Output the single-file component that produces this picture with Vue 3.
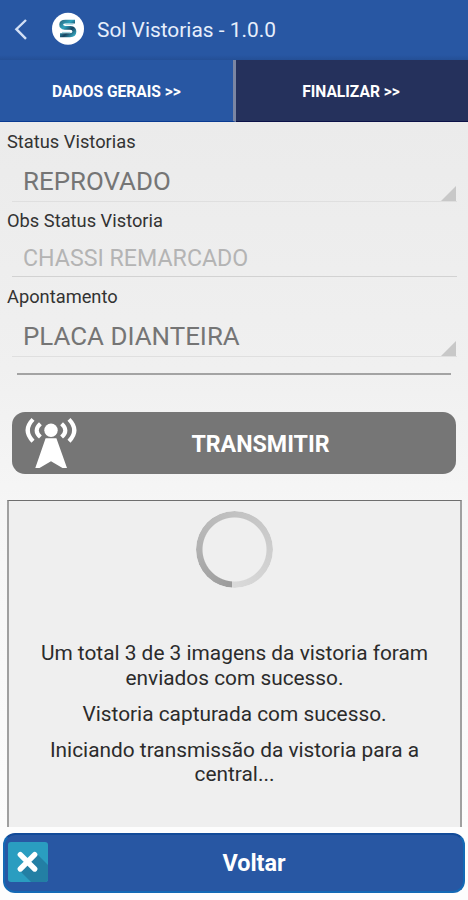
<template>
    <div class="screen">
        <header class="app-bar">
            <button class="back-btn" title="Voltar">
                <svg width="16" height="24" viewBox="0 0 16 24" fill="none">
                    <path d="M13 3L3.4 12.2L13 21.8" stroke="#d3e0f5" stroke-width="2.4"/>
                </svg>
            </button>
            <svg class="logo" width="34" height="34" viewBox="0 0 34 34">
                <defs>
                    <linearGradient id="logoFill" x1="0" y1="0" x2="1" y2="1">
                        <stop offset="0" stop-color="#2c6f86"/>
                        <stop offset="0.35" stop-color="#2fa3bd"/>
                        <stop offset="0.65" stop-color="#17435f"/>
                        <stop offset="1" stop-color="#38a9c0"/>
                    </linearGradient>
                </defs>
                <circle cx="17" cy="16.7" r="16" fill="#fff"/>
                <path d="M24 9.6H14.5Q10.2 9.6 10.2 12.6Q10.2 15.4 14 15.9H19.5Q23.4 16.4 23.4 19.6Q23.4 23.2 19 23.2H9" fill="none" stroke="url(#logoFill)" stroke-width="3.9"/>
                <path d="M14.5 12.2H22.4M11 20.4H19.3" fill="none" stroke="#9bd0dc" stroke-width="1"/>
            </svg>
            <h1 class="app-title">Sol Vistorias - 1.0.0</h1>
        </header>

        <nav class="tabs">
            <button
                v-for="tab in tabs"
                :key="tab.id"
                class="tab"
                :class="{ active: tab.id === activeTab }"
                @click="activeTab = tab.id"
            >
                <span>{{ tab.label }}</span>
            </button>
        </nav>

        <main class="content">
            <div class="field" v-for="field in fields" :key="field.label">
                <div class="field-label">{{ field.label }}</div>
                <div class="field-value" :class="field.type">
                    <span>{{ field.value }}</span>
                    <svg v-if="field.type === 'spinner'" class="corner" width="15" height="15" viewBox="0 0 15 15">
                        <path d="M15 0V15H0Z" fill="#c8c8c8"/>
                    </svg>
                </div>
            </div>

            <div class="divider"></div>

            <button class="send-btn">
                <svg width="54" height="52" viewBox="0 0 54 52" fill="none">
                    <circle cx="27" cy="13.2" r="6.7" fill="#fff"/>
                    <path d="M21.6 21.2H32.4L43 51H38.5L27 44.3L15.5 51H11.3Z" fill="#fff"/>
                    <g stroke="#fff" stroke-width="4.2">
                        <path d="M9 2.4Q-1.6 13.2 9 24.2"/>
                        <path d="M16.4 6.8Q9 13.4 16.4 20"/>
                        <path d="M37.6 6.8Q45 13.4 37.6 20"/>
                        <path d="M45 2.4Q55.6 13.2 45 24.2"/>
                    </g>
                </svg>
                <span>TRANSMITIR</span>
            </button>

            <section class="status-panel">
                <div class="loader"></div>
                <div class="messages">
                    <p v-for="message in messages" :key="message">{{ message }}</p>
                </div>
            </section>
        </main>

        <footer class="footer">
            <button class="exit-btn">
                <svg width="40" height="40" viewBox="0 0 40 40">
                    <rect width="40" height="40" rx="3" fill="#2a9dc0"/>
                    <path d="M28 11L40 23V37Q40 40 37 40H23L11 28Z" fill="#237fa4"/>
                    <path d="M12.3 12.6L26.7 27M26.7 12.6L12.3 27" stroke="#fff" stroke-width="5.4" stroke-linecap="round"/>
                </svg>
                <span>Voltar</span>
            </button>
        </footer>
    </div>
</template>

<script setup>
import { ref } from 'vue';

const activeTab = ref('finalizar');

const tabs = [
    { id: 'dados', label: 'DADOS GERAIS >>' },
    { id: 'finalizar', label: 'FINALIZAR >>' }
];

const fields = [
    { label: 'Status Vistorias', value: 'REPROVADO', type: 'spinner' },
    { label: 'Obs Status Vistoria', value: 'CHASSI REMARCADO', type: 'text' },
    { label: 'Apontamento', value: 'PLACA DIANTEIRA', type: 'spinner' }
];

const messages = [
    'Um total 3 de 3 imagens da vistoria foram enviados com sucesso.',
    'Vistoria capturada com sucesso.',
    'Iniciando transmissão da vistoria para a central...'
];
</script>

<style>
body {
    margin: 0;
    background: #fff;
}
</style>

<style scoped>
.screen {
    width: 468px;
    height: 900px;
    display: flex;
    flex-direction: column;
    overflow: hidden;
    background: #fdfdfd;
    font-family: Roboto, "Liberation Sans", sans-serif;
}

button {
    border: none;
    padding: 0;
    margin: 0;
    font-family: inherit;
    cursor: pointer;
}

.app-bar {
    height: 60px;
    flex: none;
    box-sizing: border-box;
    display: flex;
    align-items: center;
    padding: 0 0 3px 13px;
    background: linear-gradient(#2857a3 55px, #244f96);
}

.back-btn {
    display: flex;
    background: transparent;
}

.logo {
    margin-left: 22px;
}

.app-title {
    margin: 2px 0 0 12px;
    font-size: 20.9px;
    font-weight: 400;
    color: #e6eefb;
    white-space: nowrap;
}

.tabs {
    height: 62px;
    flex: none;
    display: flex;
}

.tab {
    flex: 1;
    box-sizing: border-box;
    padding-top: 2px;
    background: #2857a3;
    border-bottom: 1px solid #093a91;
    color: #fff;
    font-size: 15.6px;
    font-weight: 700;
}

.tab:first-child {
    flex: none;
    width: 236px;
    border-right: 3px solid #7b86a3;
}

.tab.active {
    background: #25315c;
    border-bottom-color: #0b1147;
    padding-right: 2px;
}

.content {
    height: 705px;
    flex: none;
    box-sizing: border-box;
    display: flex;
    flex-direction: column;
    padding: 9px 6px 0 7px;
    background: linear-gradient(#ebebeb, #f0f0f0 35%, #f6f6f6 55%, #fcfcfc);
}

.field {
    margin-bottom: 8px;
}

.field:nth-child(2) {
    margin-bottom: 9px;
}

.field-label {
    line-height: 22px;
    font-size: 18.3px;
    color: #333;
}

.field-value {
    height: 42px;
    box-sizing: border-box;
    margin: 7px 5px 0;
    padding-left: 11px;
    display: flex;
    align-items: center;
    justify-content: space-between;
    border-bottom: 1px solid #dfdfdf;
    color: #757575;
    font-size: 25.9px;
}

.field-value.text {
    height: 38px;
    padding-top: 1px;
    border-bottom-color: #d2d2d2;
    color: #b4b4b4;
    font-size: 23.2px;
}

.corner {
    align-self: flex-end;
    margin-right: 1px;
}

.divider {
    height: 2px;
    flex: none;
    margin: 8px 11px 0 10px;
    background: #a3a3a3;
}

.send-btn {
    height: 62px;
    flex: none;
    margin: 37px 6px 0 5px;
    padding: 0 13px 0 12px;
    box-sizing: border-box;
    display: flex;
    align-items: center;
    border-radius: 13px;
    background: #767676;
    color: #fff;
    font-size: 23.2px;
    font-weight: 700;
}

.send-btn span {
    flex: 1;
    padding-top: 2px;
}

.status-panel {
    flex: 1;
    margin-top: 26px;
    display: flex;
    flex-direction: column;
    align-items: center;
    border: 1px solid #6e6e6e;
    border-width: 1px 2px 0;
    border-color: #6e6e6e #a0a0a0;
    background: #efefef;
}

.loader {
    width: 77px;
    height: 77px;
    flex: none;
    margin: 10px 1px 0 0;
    border-radius: 50%;
    background: conic-gradient(from 184deg, #9b9b9b, #b2b2b2 25%, #c2c2c2 50%, #cecece 75%, #dadada);
    mask: radial-gradient(circle, transparent 31.5px, #000 32.5px);
}

.messages {
    margin-top: 53px;
    padding: 0 20px;
    text-align: center;
    font-size: 20.85px;
    line-height: 24.5px;
    color: #2b2b2b;
}

.messages p {
    margin: 0 0 11.5px;
}

.footer {
    flex: 1;
    padding: 6px 3px 8px;
}

.exit-btn {
    width: 100%;
    height: 60px;
    box-sizing: border-box;
    display: flex;
    align-items: center;
    padding: 0 3px 2px 3px;
    border: 2px solid #1469b5;
    border-top-color: #124a98;
    border-radius: 12px;
    background: #2857a3;
    color: #fff;
    font-size: 23.4px;
    font-weight: 700;
}

.exit-btn span {
    flex: 1;
    padding-top: 1px;
}
</style>
